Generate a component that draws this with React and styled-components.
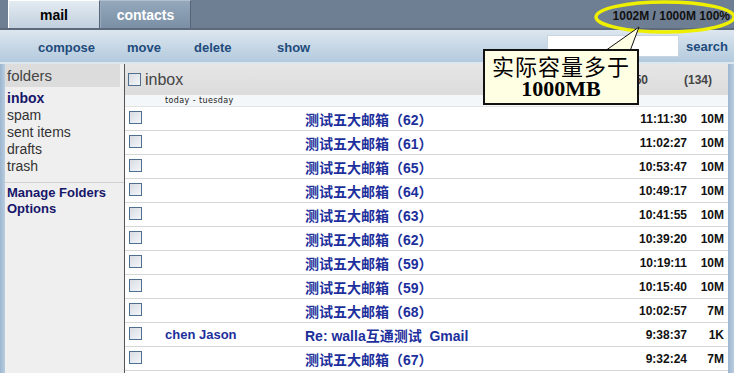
import React from "react";
import styled, { createGlobalStyle } from "styled-components";

const Global = createGlobalStyle`
  html, body { margin: 0; padding: 0; background: #fff; }
  body { width: 734px; height: 373px; overflow: hidden; font-family: "Liberation Sans", Arial, sans-serif; }
`;

const Page = styled.div`
  position: relative;
  width: 734px;
  height: 373px;
  display: flex;
  flex-direction: column;
  overflow: hidden;
  background: #fff;
`;

const TopBar = styled.div`
  height: 28px;
  background: #6f7f93;
  display: flex;
  align-items: stretch;
  padding-left: 8px;
  border-bottom: 2px solid #5c6a7c;
`;

const Tab = styled.div`
  width: ${p => p.$w}px;
  display: flex;
  align-items: center;
  justify-content: center;
  font-weight: bold;
  font-size: 14px;
  color: ${p => (p.$active ? "#000" : "#fff")};
  background: ${p => (p.$active ? "linear-gradient(#e4ebf2, #c2d0de)" : "linear-gradient(#95a8bc, #7a8fa5)")};
  border-top: 1px solid ${p => (p.$active ? "#fff" : "#b0c0d0")};
  border-left: 1px solid ${p => (p.$active ? "#fff" : "#9aabbd")};
  border-right: 1px solid #556577;
  box-sizing: border-box;
`;

const Quota = styled.div`
  margin-left: auto;
  margin-right: 4px;
  align-self: center;
  font-weight: bold;
  font-size: 12px;
  color: #111;
  padding-top: 3px;
`;

const Toolbar = styled.div`
  height: 32px;
  display: flex;
  align-items: center;
  padding-left: 38px;
  background: linear-gradient(#dce6ef, #b3cadd);
  border-bottom: 2px solid #dde7ef;
`;

const ToolLink = styled.span`
  width: ${p => p.$w}px;
  font-weight: bold;
  font-size: 13px;
  color: #1e4b7c;
  padding-top: 2px;
`;

const SearchBox = styled.div`
  margin-left: auto;
  width: 130px;
  height: 20px;
  background: #fff;
  border: 1px solid #c9d6e2;
  margin-right: 7px;
`;

const SearchLabel = styled.span`
  font-weight: bold;
  font-size: 13px;
  color: #1e4b7c;
  margin-right: 6px;
`;

const Main = styled.div`
  flex: 1;
  display: flex;
  min-height: 0;
`;

const Strip = styled.div`
  width: ${p => p.$w}px;
  background: linear-gradient(90deg, #9db6cf, #b9cde0);
`;

const Sidebar = styled.div`
  width: 119px;
  background: #efefef;
  border-right: 1px solid #555;
  display: flex;
  flex-direction: column;
`;

const SideHeader = styled.div`
  height: 23px;
  display: flex;
  align-items: center;
  padding-left: 2px;
  background: #dcdcdc;
  font-size: 15px;
  color: #444;
  margin-right: 4px;
`;

const FolderList = styled.div`
  display: flex;
  flex-direction: column;
  padding: 3px 0 7px 2px;
  border-bottom: 1px solid #d0d0d0;
`;

const Folder = styled.div`
  height: 17px;
  line-height: 17px;
  font-size: 14px;
  font-weight: ${p => (p.$active ? "bold" : "normal")};
  color: ${p => (p.$active ? "#16166a" : "#333")};
`;

const Extra = styled.div`
  display: flex;
  flex-direction: column;
  padding: 2px 0 0 2px;
`;

const ExtraLink = styled.div`
  height: 16px;
  line-height: 16px;
  font-size: 13px;
  font-weight: bold;
  color: #16166a;
`;

const Content = styled.div`
  flex: 1;
  display: flex;
  flex-direction: column;
`;

const ListHeader = styled.div`
  height: 31px;
  display: flex;
  align-items: center;
  padding-left: 3px;
  background: linear-gradient(#e6e6e6, #dcdcdc);
`;

const Title = styled.span`
  font-size: 16px;
  color: #444;
  margin-left: 4px;
`;

const Sort = styled.span`
  margin-left: auto;
  font-size: 12px;
  color: #666;
`;

const Count = styled.span`
  font-size: 12px;
  font-weight: bold;
  color: #444;
  margin-left: ${p => p.$ml}px;
  margin-right: ${p => p.$mr || 0}px;
`;

const Box = styled.span`
  display: inline-block;
  width: 13px;
  height: 13px;
  box-sizing: border-box;
  border: 1px solid #4f6f90;
  background: linear-gradient(135deg, #d8dde3, #f4f6f8);
  margin-left: ${p => p.$ml || 0}px;
`;

const DayRow = styled.div`
  height: 11px;
  line-height: 11px;
  padding-left: 40px;
  font-family: "DejaVu Sans", Verdana, sans-serif;
  font-size: 8px;
  letter-spacing: 0.4px;
  color: #222;
  background: #f4f7f9;
  border-bottom: 1px solid #e3e3e3;
`;

const Row = styled.div`
  height: 23px;
  display: grid;
  grid-template-columns: 40px 140px 312px 70px 41px;
  align-items: center;
  border-bottom: 1px solid #d6d6d6;
  background: #fff;
`;

const Sender = styled.span`
  font-size: 13px;
  font-weight: bold;
  color: #1d2f9c;
`;

const Subject = styled.span`
  font-family: "Liberation Sans", "Noto Sans CJK SC", sans-serif;
  font-size: 14px;
  font-weight: bold;
  color: #1d2f9c;
  white-space: pre;
`;

const Cell = styled.span`
  text-align: right;
  font-size: 12px;
  font-weight: bold;
  color: #111;
  padding-right: ${p => p.$pr || 0}px;
`;

const Overlay = styled.svg`
  position: absolute;
  left: 0;
  top: 0;
  pointer-events: none;
`;

const Callout = styled.div`
  position: absolute;
  left: 483px;
  top: 49px;
  width: 156px;
  height: 56px;
  box-sizing: border-box;
  border: 2px solid #111;
  background: #ffffe4;
  display: flex;
  flex-direction: column;
  align-items: center;
  justify-content: center;
  line-height: 23px;
  color: #000;
`;

const CalloutCjk = styled.span`
  font-family: "Noto Sans CJK SC", sans-serif;
  font-size: 22px;
  letter-spacing: 1px;
`;

const CalloutNum = styled.span`
  font-family: "Liberation Serif", serif;
  font-weight: bold;
  font-size: 22px;
`;

const rows = [
  ["", "测试五大邮箱（62）", "11:11:30", "10M"],
  ["", "测试五大邮箱（61）", "11:02:27", "10M"],
  ["", "测试五大邮箱（65）", "10:53:47", "10M"],
  ["", "测试五大邮箱（64）", "10:49:17", "10M"],
  ["", "测试五大邮箱（63）", "10:41:55", "10M"],
  ["", "测试五大邮箱（62）", "10:39:20", "10M"],
  ["", "测试五大邮箱（59）", "10:19:11", "10M"],
  ["", "测试五大邮箱（59）", "10:15:40", "10M"],
  ["", "测试五大邮箱（68）", "10:02:57", "7M"],
  ["chen Jason", "Re: walla互通测试  Gmail", "9:38:37", "1K"],
  ["", "测试五大邮箱（67）", "9:32:24", "7M"],
];

export default function App() {
  return (
    <Page>
      <Global />
      <TopBar>
        <Tab $w={92} $active>mail</Tab>
        <Tab $w={91}>contacts</Tab>
        <Quota>1002M / 1000M 100%</Quota>
      </TopBar>
      <Toolbar>
        <ToolLink $w={89}>compose</ToolLink>
        <ToolLink $w={67}>move</ToolLink>
        <ToolLink $w={83}>delete</ToolLink>
        <ToolLink $w={60}>show</ToolLink>
        <SearchBox />
        <SearchLabel>search</SearchLabel>
      </Toolbar>
      <Main>
        <Strip $w={5} />
        <Sidebar>
          <SideHeader>folders</SideHeader>
          <FolderList>
            <Folder $active>inbox</Folder>
            <Folder>spam</Folder>
            <Folder>sent items</Folder>
            <Folder>drafts</Folder>
            <Folder>trash</Folder>
          </FolderList>
          <Extra>
            <ExtraLink>Manage Folders</ExtraLink>
            <ExtraLink>Options</ExtraLink>
          </Extra>
        </Sidebar>
        <Content>
          <ListHeader>
            <Box />
            <Title>inbox</Title>
            <Sort>Date, Newest on top</Sort>
            <Count $ml={14}>1 - 50</Count>
            <Count $ml={36} $mr={16}>(134)</Count>
          </ListHeader>
          <DayRow>today - tuesday</DayRow>
          {rows.map((r, i) => (
            <Row key={i}>
              <span><Box $ml={4} /></span>
              <Sender>{r[0]}</Sender>
              <Subject>{r[1]}</Subject>
              <Cell>{r[2]}</Cell>
              <Cell $pr={4}>{r[3]}</Cell>
            </Row>
          ))}
        </Content>
        <Strip $w={6} />
      </Main>
      <Overlay width="734" height="373" viewBox="0 0 734 373">
        <ellipse cx="665" cy="17" rx="69" ry="15" fill="none" stroke="#eef000" strokeWidth="3.5" />
        <polygon points="605,51 639,27 630,51" fill="#ffffe4" />
        <polyline points="605,51 639,27 630,51" fill="none" stroke="#111" strokeWidth="1" />
      </Overlay>
      <Callout>
        <CalloutCjk>实际容量多于</CalloutCjk>
        <CalloutNum>1000MB</CalloutNum>
      </Callout>
    </Page>
  );
}
